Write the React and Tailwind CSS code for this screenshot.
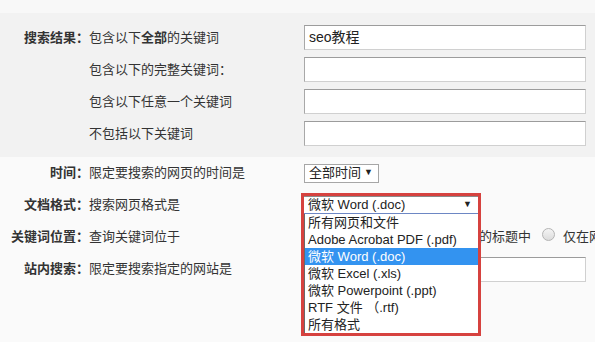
import React from 'react';

const font = { fontFamily: '"Liberation Sans", "Noto Sans CJK SC", sans-serif' };

const TextBox = ({ value }) => (
  <div className="h-[25px] w-[282px] bg-white border border-[#d0d0d0] border-t-[#9c9c9c] border-l-[#a8a8a8] px-[4px] flex items-center text-[14px] text-[#222]">
    {value}
  </div>
);

const Radio = () => (
  <span className="inline-block w-[13px] h-[13px] rounded-full border border-[#b4b4b4] bg-gradient-to-b from-[#f4f4f4] to-[#dcdcdc] shrink-0" />
);

const options = [
  '所有网页和文件',
  'Adobe Acrobat PDF (.pdf)',
  '微软 Word (.doc)',
  '微软 Excel (.xls)',
  '微软 Powerpoint (.ppt)',
  'RTF 文件 （.rtf)',
  '所有格式',
];

const Row = ({ label, desc, children, h = 'h-[32px]' }) => (
  <div className={`flex items-center ${h}`}>
    <div className="w-[89px] shrink-0 text-right font-bold text-[#333]">{label}</div>
    <div className="w-[215px] shrink-0 text-[#333] whitespace-nowrap">{desc}</div>
    <div className="flex items-center">{children}</div>
  </div>
);

export default function App() {
  return (
    <div className="relative w-[595px] h-[342px] overflow-hidden bg-[#fafafa] text-[13px]" style={font}>
      <div className="h-[13px] bg-[#f8f8f8]" />
      <div className="bg-[#f2f2f2] pt-[12px] pb-[11px] flex flex-col gap-[7px]">
        <Row label="搜索结果：" desc={<span>包含以下<b>全部</b>的关键词</span>} h="h-[25px]">
          <TextBox value="seo教程" />
        </Row>
        <Row label="" desc="包含以下的完整关键词：" h="h-[25px]">
          <TextBox />
        </Row>
        <Row label="" desc="包含以下任意一个关键词" h="h-[25px]">
          <TextBox />
        </Row>
        <Row label="" desc="不包括以下关键词" h="h-[25px]">
          <TextBox />
        </Row>
      </div>

      <div className="flex flex-col">
        <Row label="时间：" desc="限定要搜索的网页的时间是">
          <div className="h-[19px] w-[75px] bg-white border border-[#a6a6a6] flex items-center justify-between pl-[4px] pr-[5px] text-[#222]">
            <span>全部时间</span>
            <span className="text-[9px]">▼</span>
          </div>
        </Row>
        <Row label="文档格式：" desc="搜索网页格式是">
          <div className="h-[19px] w-[174px] bg-white border border-[#a6a6a6]" />
        </Row>
        <Row label="关键词位置：" desc="查询关键词位于">
          <div className="flex items-center whitespace-nowrap text-[#333]">
            <span className="ml-[1px]"><Radio /></span>
            <span className="ml-[3px]">网页的任何地方</span>
            <span className="ml-[12px]"><Radio /></span>
            <span className="ml-[3px]">仅网页的标题中</span>
            <span className="ml-[11px]"><Radio /></span>
            <span className="ml-[8px]">仅在网页的URL中</span>
          </div>
        </Row>
        <Row label="站内搜索：" desc="限定要搜索指定的网站是">
          <TextBox />
        </Row>
      </div>

      {/* opened dropdown, highlighted */}
      <div className="absolute left-[301px] top-[193px] w-[180px] h-[143px] border-[3px] border-[#d6423f] bg-white">
        <div className="h-[18px] border-t border-[#8a8a8a] border-b border-b-[#6d87c4] flex items-center justify-between pl-[4px] pr-[6px] text-[#222]">
          <span>微软 Word (.doc)</span>
          <span className="text-[9px]">▼</span>
        </div>
        <div className="border-l border-[#6a6a6a] h-[119px] flex flex-col">
          {options.map((o) => (
            <div
              key={o}
              className={`h-[17px] leading-[17px] pl-[3px] whitespace-nowrap ${o === '微软 Word (.doc)' ? 'bg-[#3393f0] text-white' : 'text-[#222]'}`}
            >
              {o}
            </div>
          ))}
        </div>
      </div>
    </div>
  );
}
